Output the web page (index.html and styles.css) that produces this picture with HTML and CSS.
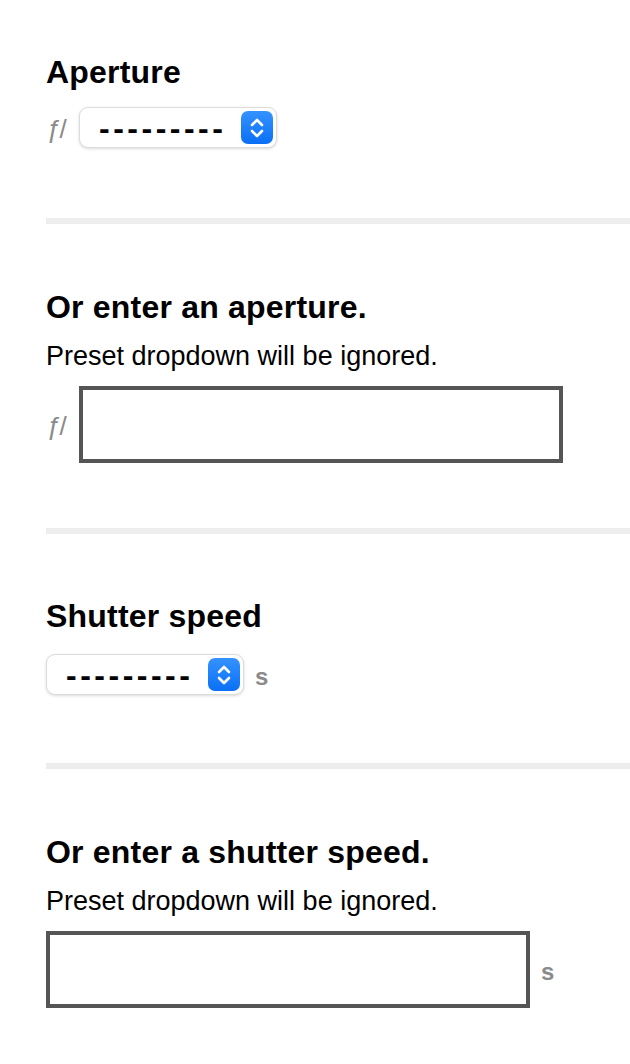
FILE: index.html
```html
<!DOCTYPE html>
<html lang="en">
<head>
    <meta charset="UTF-8">
    <meta name="viewport" content="width=device-width, initial-scale=1.0">
    <title>Exposure</title>
    <link rel="stylesheet" href="styles.css">
</head>
<body>

<div class="field">
    <h2>Aperture</h2>
    <div class="row">
        <span class="unit fstop">ƒ/</span>
        <div class="select">
            <select>
                <option>---------</option>
            </select>
            <span class="stepper">
                <svg width="16" height="24" viewBox="0 0 16 24"><path d="M3 9 L8 4 L13 9 M3 15 L8 20 L13 15" fill="none" stroke="#fff" stroke-width="2.6" stroke-linecap="round" stroke-linejoin="round"/></svg>
            </span>
        </div>
    </div>
</div>

<div class="field">
    <h2>Or enter an aperture.</h2>
    <p class="hint">Preset dropdown will be ignored.</p>
    <div class="row">
        <span class="unit fstop">ƒ/</span>
        <input type="text" class="text-input">
    </div>
</div>

<div class="field shutter">
    <h2>Shutter speed</h2>
    <div class="row">
        <div class="select">
            <select>
                <option>---------</option>
            </select>
            <span class="stepper">
                <svg width="16" height="24" viewBox="0 0 16 24"><path d="M3 9 L8 4 L13 9 M3 15 L8 20 L13 15" fill="none" stroke="#fff" stroke-width="2.6" stroke-linecap="round" stroke-linejoin="round"/></svg>
            </span>
        </div>
        <span class="unit secs">s</span>
    </div>
</div>

<div class="field last">
    <h2>Or enter a shutter speed.</h2>
    <p class="hint">Preset dropdown will be ignored.</p>
    <div class="row">
        <input type="text" class="text-input">
        <span class="unit secs">s</span>
    </div>
</div>

</body>
</html>
```

FILE: styles.css
```css
* {
    margin: 0;
    padding: 0;
    box-sizing: border-box;
}

body {
    padding-left: 46px;
    background: #fff;
    color: #000;
    font-family: "Liberation Sans", Arial, sans-serif;
    overflow-x: hidden;
}

.field {
    padding-top: 63px;
    padding-bottom: 65px;
    border-bottom: 6px solid #ededed;
}

.field:first-child {
    padding-top: 52px;
    padding-bottom: 70px;
}

.field.shutter {
    padding-top: 62px;
    padding-bottom: 68px;
}

.field.last {
    border-bottom: none;
    padding-bottom: 40px;
}

h2 {
    font-size: 32px;
    line-height: 40px;
    font-weight: bold;
    letter-spacing: 0.2px;
}

.hint {
    font-size: 27px;
    line-height: 32px;
    margin-top: 13px;
}

.row {
    display: flex;
    align-items: center;
    margin-top: 15px;
}

.hint + .row {
    margin-top: 14px;
}

.shutter .row {
    margin-top: 18px;
}

.unit {
    color: #8a8a8a;
    font-size: 26px;
}

.fstop {
    width: 33px;
    padding-left: 1px;
    letter-spacing: -2px;
    padding-top: 3px;
}

.secs {
    margin-left: 11px;
    padding-top: 5px;
    font-weight: bold;
    font-size: 24px;
}

.select {
    display: flex;
    align-items: center;
    width: 198px;
    height: 41px;
    background: #fff;
    border: 1px solid #dcdcdc;
    border-radius: 9px;
    box-shadow: 0 1px 3px rgba(0, 0, 0, 0.15);
    padding-right: 3px;
}

.select select {
    appearance: none;
    -webkit-appearance: none;
    flex: 1;
    border: none;
    background: transparent;
    font-family: "Liberation Sans", Arial, sans-serif;
    font-size: 32px;
    font-weight: bold;
    letter-spacing: 3.5px;
    padding-left: 19px;
    color: #000;
    outline: none;
}

.stepper {
    display: flex;
    align-items: center;
    justify-content: center;
    width: 32px;
    height: 33px;
    border-radius: 7px;
    background: linear-gradient(180deg, #3593ff 0%, #0a6ff5 100%);
}

.text-input {
    width: 484px;
    height: 77px;
    border: 4px solid #555;
    background: #fff;
    font-size: 26px;
    padding: 0 10px;
    outline: none;
}
```
